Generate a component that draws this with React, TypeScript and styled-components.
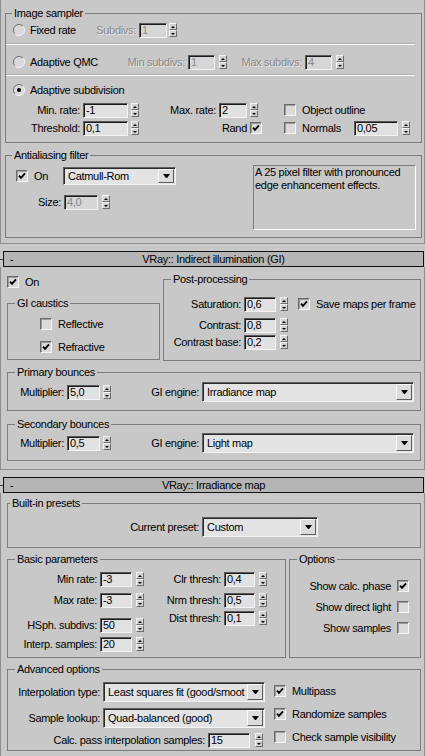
import styled, { createGlobalStyle } from "styled-components";

const GlobalStyle = createGlobalStyle`
  html, body {
    margin: 0;
    padding: 0;
    background: #c8c8c8;
  }
  * {
    box-sizing: border-box;
  }
`;

const Screen = styled.div`
  width: 425px;
  height: 756px;
  overflow: hidden;
  background: #c8c8c8;
  color: #000;
  font-family: "Liberation Sans", Arial, sans-serif;
  font-size: 11px;
  letter-spacing: -0.3px;
  line-height: 13px;
`;

const RolloutBody = styled.div<{ $pl: number; $pr: number; $pb: number }>`
  display: flex;
  flex-direction: column;
  border: 1px solid #8e8e8e;
  border-top: none;
  padding: 0 ${(p) => p.$pr}px ${(p) => p.$pb}px ${(p) => p.$pl}px;
`;

const HeaderRow = styled.div`
  display: flex;
  align-items: center;
  margin-top: 7px;
`;

const HeaderTick = styled.span`
  width: 3px;
  height: 1px;
  background: #3a3a3a;
`;

const Header = styled.div`
  width: 421px;
  height: 16px;
  display: grid;
  grid-template-columns: 24px 1fr 24px;
  align-items: center;
  border: 1px solid #111;
  background: #b5b5b5;
  line-height: 14px;
`;

const HeaderSign = styled.span`
  padding-left: 6px;
`;

const HeaderTitle = styled.span`
  text-align: center;
  white-space: nowrap;
`;

// group box: fieldset + legend gives the label-over-the-line look
const Group = styled.fieldset<{ $h: number; $mt?: number; $w?: number }>`
  flex: none;
  margin: ${(p) => p.$mt ?? 0}px 0 0;
  padding: 0;
  min-width: 0;
  width: ${(p) => (p.$w ? `${p.$w}px` : "auto")};
  height: ${(p) => p.$h}px;
  border: 1px solid #7c7c7c;
`;

const Legend = styled.legend<{ $ml?: number }>`
  margin-left: ${(p) => p.$ml ?? 7}px;
  padding: 0 2px;
  height: 13px;
  line-height: 13px;
`;

const Split = styled.div<{ $gap?: number; $mt?: number }>`
  display: flex;
  align-items: flex-start;
  gap: ${(p) => p.$gap ?? 0}px;
  margin-top: ${(p) => p.$mt ?? 0}px;
`;

const Column = styled.div<{ $w?: number }>`
  flex: none;
  display: flex;
  flex-direction: column;
  width: ${(p) => (p.$w ? `${p.$w}px` : "auto")};
`;

const Row = styled.div<{ $mt?: number; $h?: number; $pl?: number; $pr?: number; $end?: boolean }>`
  display: flex;
  align-items: center;
  justify-content: ${(p) => (p.$end ? "flex-end" : "flex-start")};
  height: ${(p) => p.$h ?? 16}px;
  margin-top: ${(p) => p.$mt ?? 0}px;
  padding-left: ${(p) => p.$pl ?? 0}px;
  padding-right: ${(p) => p.$pr ?? 0}px;
  white-space: nowrap;
`;

const Rule = styled.div<{ $mt: number }>`
  height: 2px;
  margin: ${(p) => p.$mt}px 6px 0 0;
  border-top: 1px solid #b0b0b0;
  border-bottom: 1px solid #fff;
`;

const Label = styled.span<{ $w?: number; $dim?: boolean }>`
  flex: none;
  width: ${(p) => (p.$w ? `${p.$w}px` : "auto")};
  padding-right: 3px;
  text-align: right;
  color: ${(p) => (p.$dim ? "#8a8a8a" : "#000")};
  text-shadow: ${(p) => (p.$dim ? "1px 1px 0 #e4e4e4" : "none")};
`;

const Gap = styled.span<{ $w: number }>`
  flex: none;
  width: ${(p) => p.$w}px;
`;

const NumBox = styled.span<{ $w: number; $dim?: boolean }>`
  flex: none;
  width: ${(p) => p.$w}px;
  height: 15px;
  padding-left: 2px;
  line-height: 13px;
  border: 1px solid;
  border-color: #5a5a5a #f4f4f4 #f4f4f4 #5a5a5a;
  box-shadow: inset 1px 1px 0 #1a1a1a;
  background: ${(p) => (p.$dim ? "#d6d6d6" : "#e1e1e1")};
  color: ${(p) => (p.$dim ? "#8a8a8a" : "#000")};
  overflow: hidden;
`;

const SpinWrap = styled.span<{ $ml?: number }>`
  flex: none;
  display: flex;
  flex-direction: column;
  width: 8px;
  height: 14px;
  margin-left: ${(p) => p.$ml ?? 3}px;
`;

const SpinBtn = styled.span<{ $down?: boolean }>`
  flex: 1;
  display: flex;
  align-items: center;
  justify-content: center;
  background: #d2d2d2;
  border: 1px solid;
  border-color: #f4f4f4 #6c6c6c #6c6c6c #f4f4f4;

  &::after {
    content: "";
    width: 0;
    border-left: 2px solid transparent;
    border-right: 2px solid transparent;
    ${(p) => (p.$down ? "border-top: 2px solid #000;" : "border-bottom: 2px solid #000;")}
  }
`;

const CheckBox = styled.span`
  flex: none;
  width: 12px;
  height: 12px;
  display: flex;
  align-items: center;
  justify-content: center;
  border: 1px solid;
  border-color: #6a6a6a #f6f6f6 #f6f6f6 #6a6a6a;
  box-shadow: inset 1px 1px 0 #9c9c9c;
  background: #dadada;
`;

const RadioMark = styled.svg`
  flex: none;
`;

const Opt = styled.span<{ $w?: number; $gap?: number }>`
  flex: none;
  display: flex;
  align-items: center;
  gap: ${(p) => p.$gap ?? 6}px;
  width: ${(p) => (p.$w ? `${p.$w}px` : "auto")};
`;

const SelectBox = styled.span<{ $w: number; $h?: number }>`
  flex: none;
  display: flex;
  width: ${(p) => p.$w}px;
  height: ${(p) => p.$h ?? 20}px;
  padding: 1px;
  border: 1px solid;
  border-color: #5e5e5e #f4f4f4 #f4f4f4 #5e5e5e;
  box-shadow: inset 1px 1px 0 #2a2a2a;
  background: #e3e3e3;
`;

const SelectValue = styled.span`
  flex: 1;
  min-width: 0;
  display: flex;
  align-items: center;
  padding-left: 3px;
  overflow: hidden;
  white-space: nowrap;
`;

const SelectArrow = styled.span`
  flex: none;
  width: 16px;
  display: flex;
  align-items: center;
  justify-content: center;
  background: #dcdcdc;
  border: 1px solid;
  border-color: #fafafa #5c5c5c #5c5c5c #fafafa;

  &::after {
    content: "";
    width: 1px;
    border-left: 3px solid transparent;
    border-right: 3px solid transparent;
    border-top: 4px solid #000;
  }
`;

const Note = styled.div`
  flex: none;
  width: 163px;
  height: 65px;
  margin: 0 5px 0 auto;
  padding: 0 1px;
  border: 1px solid;
  border-color: #7c7c7c #fff #fff #7c7c7c;
  line-height: 13px;
`;

function Spinner({ ml }: { ml?: number }) {
  return (
    <SpinWrap $ml={ml}>
      <SpinBtn />
      <SpinBtn $down />
    </SpinWrap>
  );
}

function Check({ on }: { on?: boolean }) {
  return (
    <CheckBox>
      {on && (
        <svg width="8" height="8" viewBox="0 0 8 8">
          <polyline points="1,3.6 3,5.9 7,1.4" fill="none" stroke="#000" strokeWidth="1.9" />
        </svg>
      )}
    </CheckBox>
  );
}

function Radio({ on }: { on?: boolean }) {
  return (
    <RadioMark width="12" height="12" viewBox="0 0 12 12">
      <circle cx="6" cy="6" r="5.5" fill="#dadada" />
      <path d="M2.1 9.9 A5.5 5.5 0 0 1 9.9 2.1" stroke="#6e6e6e" fill="none" />
      <path d="M9.9 2.1 A5.5 5.5 0 0 1 2.1 9.9" stroke="#f6f6f6" fill="none" />
      {on && <circle cx="6" cy="6" r="2" fill="#000" />}
    </RadioMark>
  );
}

function NumField(props: { label: string; lw: number; value: string; w: number; ml?: number; dim?: boolean }) {
  return (
    <>
      <Label $w={props.lw}>{props.label}</Label>
      <NumBox $w={props.w} $dim={props.dim}>{props.value}</NumBox>
      <Spinner ml={props.ml} />
    </>
  );
}

function Select({ value, w, h }: { value: string; w: number; h?: number }) {
  return (
    <SelectBox $w={w} $h={h}>
      <SelectValue>{value}</SelectValue>
      <SelectArrow />
    </SelectBox>
  );
}

function RolloutHeader({ title }: { title: string }) {
  return (
    <HeaderRow>
      <HeaderTick />
      <Header>
        <HeaderSign>-</HeaderSign>
        <HeaderTitle>{title}</HeaderTitle>
        <span />
      </Header>
    </HeaderRow>
  );
}

export default function App() {
  return (
    <Screen>
      <GlobalStyle />

      <RolloutBody $pl={4} $pr={2} $pb={5}>
        <Group $h={136} $mt={7}>
          <Legend $ml={6}>Image sampler</Legend>
          <Row $mt={2} $pl={7}>
            <Opt $w={82} $gap={5}><Radio /><span>Fixed rate</span></Opt>
            <Label $w={44} $dim>Subdivs:</Label>
            <NumBox $w={28} $dim>1</NumBox>
            <Spinner ml={2} />
          </Row>
          <Rule $mt={5} />
          <Row $mt={9} $pl={7}>
            <Opt $w={112} $gap={5}><Radio /><span>Adaptive QMC</span></Opt>
            <Label $w={63} $dim>Min subdivs:</Label>
            <NumBox $w={27} $dim>1</NumBox>
            <Spinner ml={4} />
            <Label $w={78} $dim>Max subdivs:</Label>
            <NumBox $w={27} $dim>4</NumBox>
            <Spinner ml={4} />
          </Row>
          <Rule $mt={4} />
          <Row $mt={6} $pl={7}>
            <Opt $gap={5}><Radio on /><span>Adaptive subdivision</span></Opt>
          </Row>
          <Row $mt={4}>
            <NumField label="Min. rate:" lw={77} value="-1" w={45} />
            <NumField label="Max. rate:" lw={80} value="2" w={28} />
            <Gap $w={26} />
            <Opt><Check /><span>Object outline</span></Opt>
          </Row>
          <Row $mt={2}>
            <NumField label="Threshold:" lw={77} value="0,1" w={45} />
            <Label $w={111}>Rand</Label>
            <Check on />
            <Gap $w={22} />
            <Opt $w={70}><Check /><span>Normals</span></Opt>
            <NumBox $w={44}>0,05</NumBox>
            <Spinner ml={4} />
          </Row>
        </Group>

        <Group $h={89} $mt={6}>
          <Legend $ml={6}>Antialiasing filter</Legend>
          <Split $mt={3}>
            <Column>
              <Row $h={18} $mt={2} $pl={10}>
                <Opt $w={47}><Check on /><span>On</span></Opt>
                <Select w={113} h={18} value="Catmull-Rom" />
              </Row>
              <Row $mt={9}>
                <Label $w={58}>Size:</Label>
                <NumBox $w={34} $dim>4,0</NumBox>
                <Spinner ml={4} />
              </Row>
            </Column>
            <Note>
              A 25 pixel filter with pronounced
              <br />
              edge enhancement effects.
            </Note>
          </Split>
        </Group>
      </RolloutBody>

      <RolloutHeader title="VRay:: Indirect illumination (GI)" />

      <RolloutBody $pl={6} $pr={3} $pb={8}>
        <Split $gap={3}>
          <Column $w={153}>
            <Row $mt={7}>
              <Opt><Check on /><span>On</span></Opt>
            </Row>
            <Group $h={63} $mt={7}>
              <Legend>GI caustics</Legend>
              <Row $mt={6} $pl={32}>
                <Opt><Check /><span>Reflective</span></Opt>
              </Row>
              <Row $mt={7} $pl={32}>
                <Opt><Check on /><span>Refractive</span></Opt>
              </Row>
            </Group>
          </Column>
          <Column $w={258}>
            <Group $h={88} $mt={6}>
              <Legend>Post-processing</Legend>
              <Row $mt={10}>
                <NumField label="Saturation:" lw={80} value="0,6" w={32} ml={4} />
                <Gap $w={10} />
                <Opt><Check on /><span>Save maps per frame</span></Opt>
              </Row>
              <Row $mt={5}>
                <NumField label="Contrast:" lw={80} value="0,8" w={32} ml={4} />
              </Row>
              <Row $mt={1}>
                <NumField label="Contrast base:" lw={80} value="0,2" w={32} ml={4} />
              </Row>
            </Group>
          </Column>
        </Split>

        <Group $h={45} $mt={5}>
          <Legend>Primary bounces</Legend>
          <Row $h={20} $mt={3}>
            <NumField label="Multiplier:" lw={59} value="5,0" w={33} />
            <Label $w={91}>GI engine:</Label>
            <Select w={212} value="Irradiance map" />
          </Row>
        </Group>

        <Group $h={43} $mt={7}>
          <Legend>Secondary bounces</Legend>
          <Row $h={20} $mt={2}>
            <NumField label="Multiplier:" lw={59} value="0,5" w={33} />
            <Label $w={91}>GI engine:</Label>
            <Select w={212} value="Light map" />
          </Row>
        </Group>
      </RolloutBody>

      <RolloutHeader title="VRay:: Irradiance map" />

      <RolloutBody $pl={6} $pr={3} $pb={8}>
        <Group $h={51} $mt={4}>
          <Legend $ml={2}>Built-in presets</Legend>
          <Row $h={20} $mt={7}>
            <Label $w={194}>Current preset:</Label>
            <Select w={116} value="Custom" />
          </Row>
        </Group>

        <Split $gap={3} $mt={5}>
          <Group $w={279} $h={105}>
            <Legend>Basic parameters</Legend>
            <Split>
              <Column $w={136}>
                <Row $mt={5}>
                  <NumField label="Min rate:" lw={92} value="-3" w={32} ml={4} />
                </Row>
                <Row $mt={5}>
                  <NumField label="Max rate:" lw={92} value="-3" w={32} ml={4} />
                </Row>
                <Row $mt={9}>
                  <NumField label="HSph. subdivs:" lw={92} value="50" w={32} ml={4} />
                </Row>
                <Row $mt={3}>
                  <NumField label="Interp. samples:" lw={92} value="20" w={32} ml={4} />
                </Row>
              </Column>
              <Column>
                <Row $mt={5}>
                  <NumField label="Clr thresh:" lw={80} value="0,4" w={31} ml={4} />
                </Row>
                <Row $mt={5}>
                  <NumField label="Nrm thresh:" lw={80} value="0,5" w={31} ml={4} />
                </Row>
                <Row $mt={2}>
                  <NumField label="Dist thresh:" lw={80} value="0,1" w={31} ml={4} />
                </Row>
              </Column>
            </Split>
          </Group>

          <Group $w={132} $h={105}>
            <Legend>Options</Legend>
            <Row $mt={12} $pr={11} $end>
              <Opt><span>Show calc. phase</span><Check on /></Opt>
            </Row>
            <Row $mt={5} $pr={11} $end>
              <Opt><span>Show direct light</span><Check /></Opt>
            </Row>
            <Row $mt={5} $pr={11} $end>
              <Opt><span>Show samples</span><Check /></Opt>
            </Row>
          </Group>
        </Split>

        <Group $h={88} $mt={5}>
          <Legend>Advanced options</Legend>
          <Split $gap={9}>
            <Column $w={257}>
              <Row $h={20} $mt={6}>
                <Label $w={95}>Interpolation type:</Label>
                <Select w={162} value="Least squares fit (good/smoot" />
              </Row>
              <Row $h={20} $mt={6}>
                <Label $w={95}>Sample lookup:</Label>
                <Select w={162} value="Quad-balanced (good)" />
              </Row>
              <Row $mt={4}>
                <NumField label="Calc. pass interpolation samples:" lw={200} value="15" w={42} ml={5} />
              </Row>
            </Column>
            <Column>
              <Row $mt={7}>
                <Opt><Check on /><span>Multipass</span></Opt>
              </Row>
              <Row $mt={7}>
                <Opt><Check on /><span>Randomize samples</span></Opt>
              </Row>
              <Row $mt={7}>
                <Opt><Check /><span>Check sample visibility</span></Opt>
              </Row>
            </Column>
          </Split>
        </Group>
      </RolloutBody>
    </Screen>
  );
}
